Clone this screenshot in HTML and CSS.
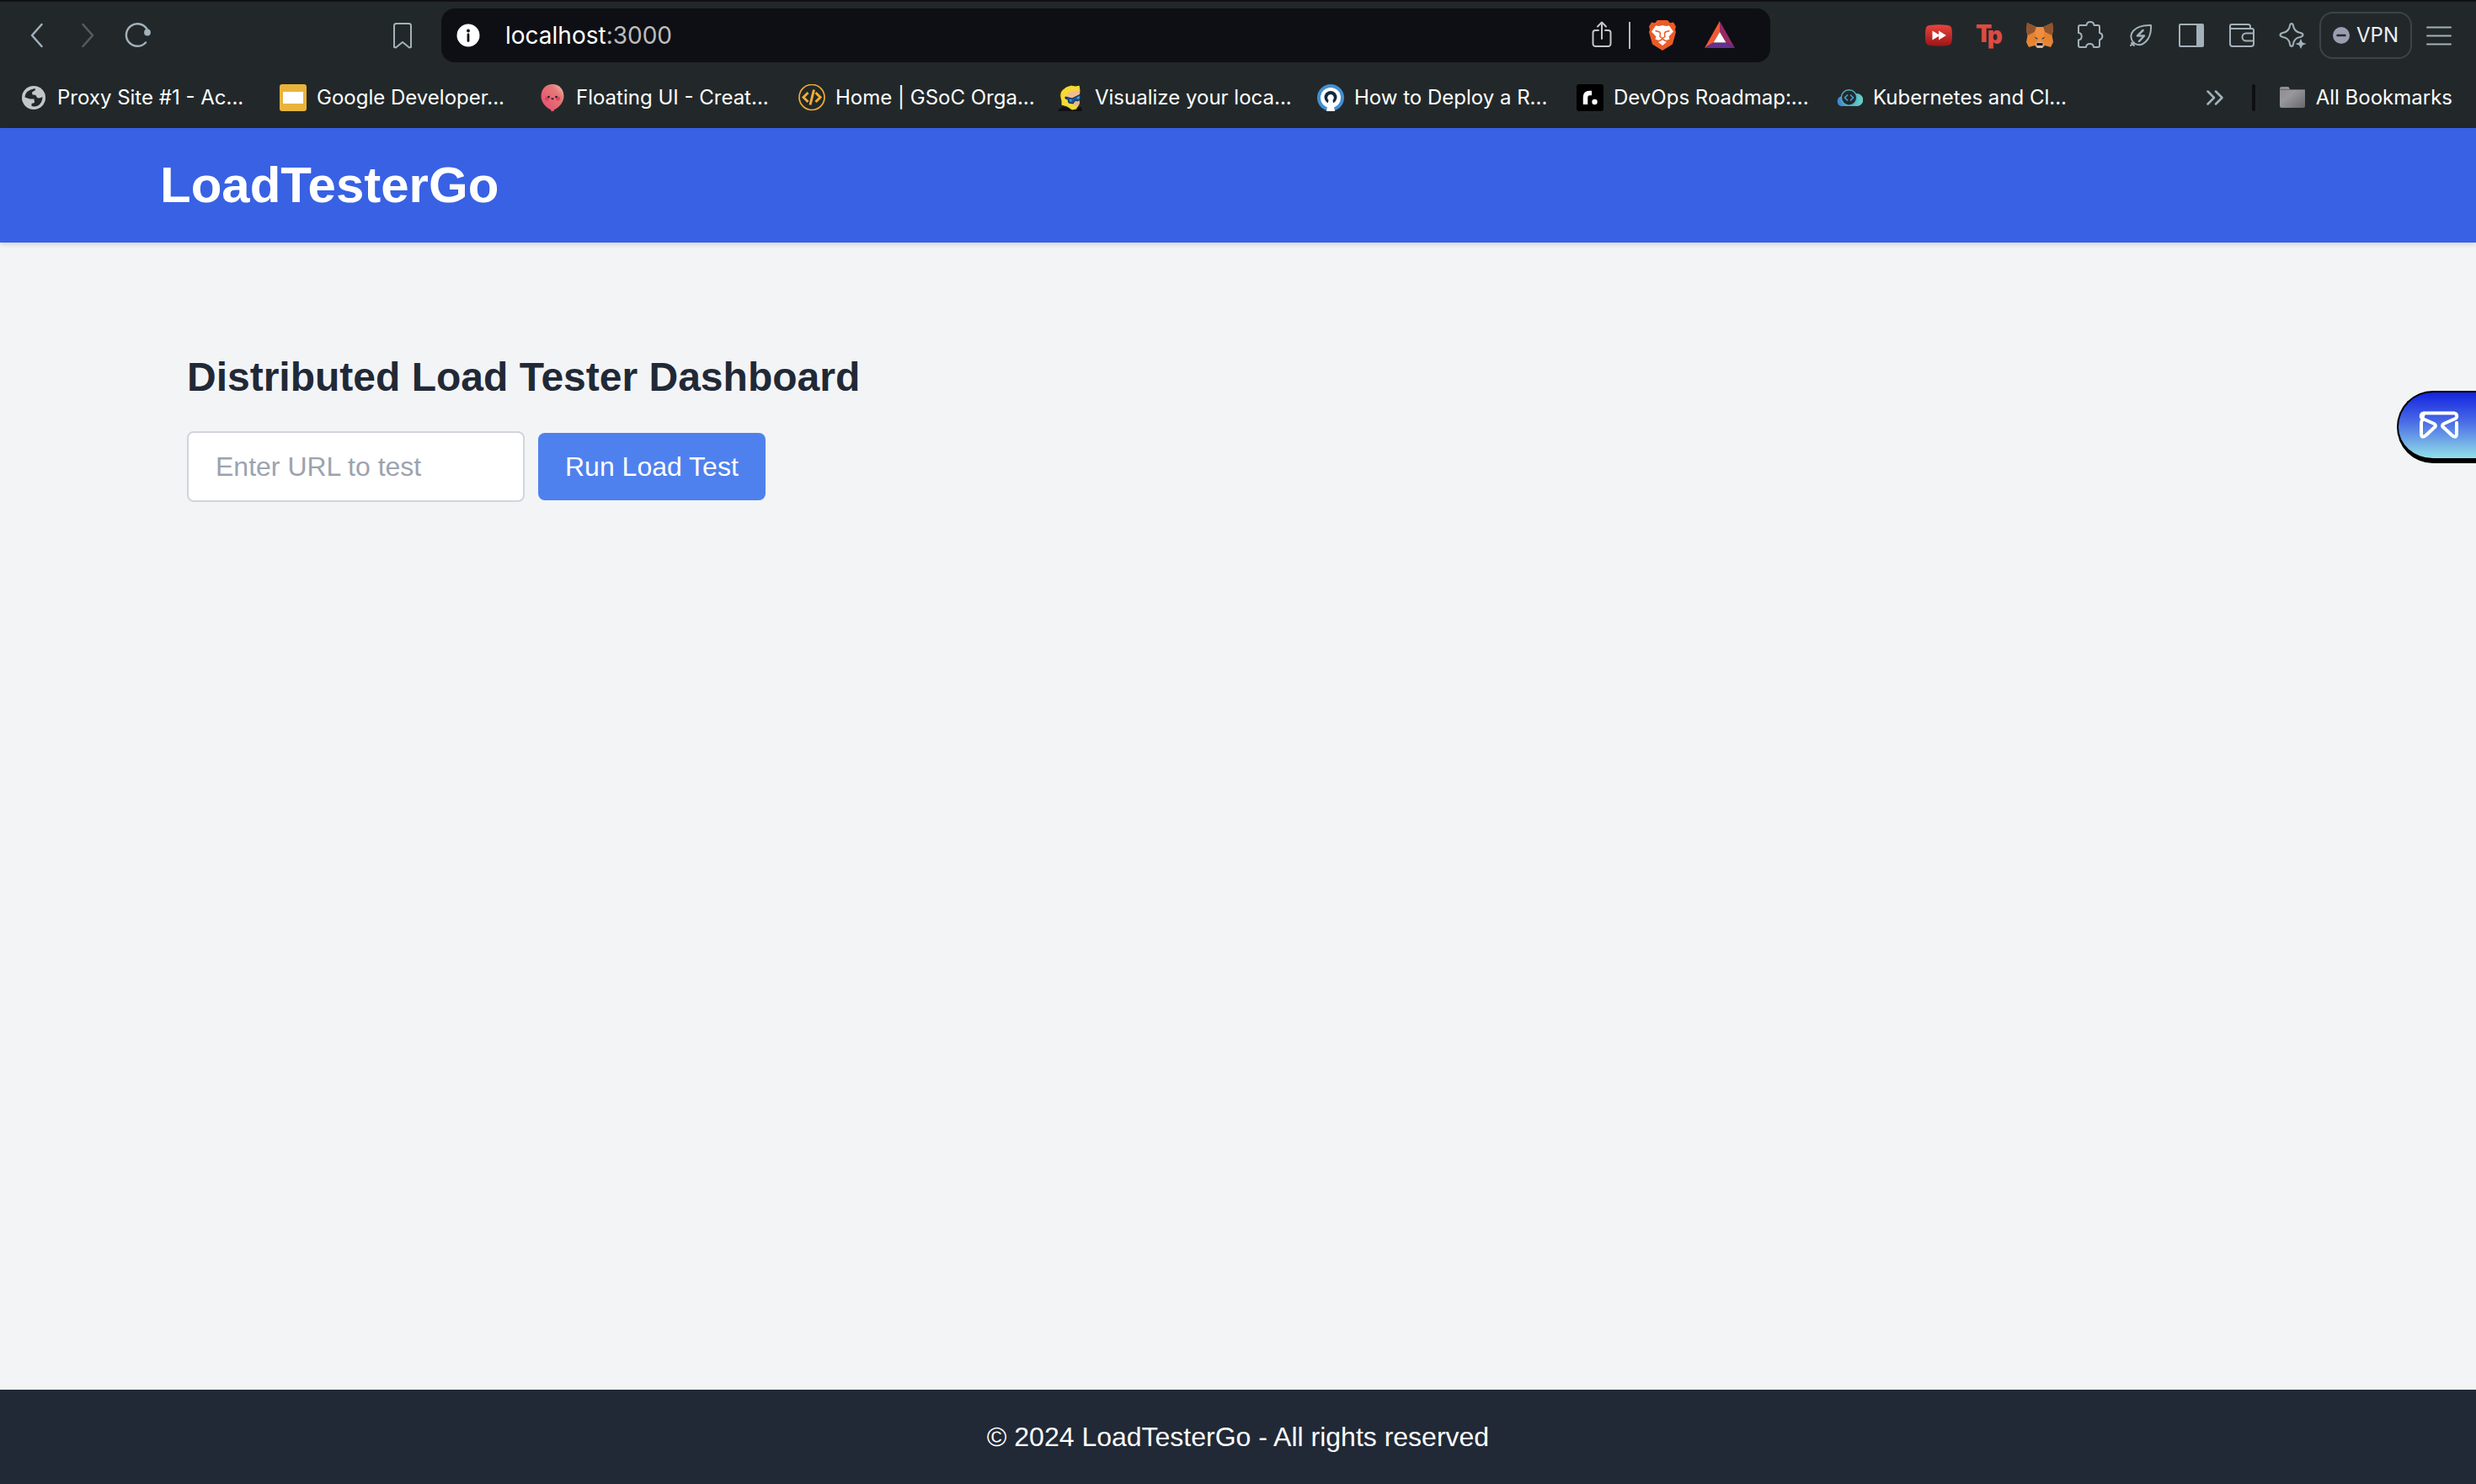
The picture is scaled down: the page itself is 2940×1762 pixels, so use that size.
FILE: index.html
```html
<!DOCTYPE html>
<html lang="en">
<head>
<meta charset="utf-8">
<meta name="viewport" content="width=device-width, initial-scale=1">
<title>LoadTesterGo</title>
<link rel="stylesheet" href="styles.css">
</head>
<body>
<div class="window">
  <div class="chrome">
    <div class="toolbar">
      <div class="nav-group">
        <button class="icon-btn" aria-label="Back"><svg viewBox="0 0 36 36"><path d="M23.500 5 12 18l11.500 13" class="line line-bold"/></svg></button>
        <button class="icon-btn dim" aria-label="Forward" disabled><svg viewBox="0 0 36 36"><path d="M12.500 5 24 18 12.500 31" class="line line-bold"/></svg></button>
        <button class="icon-btn" aria-label="Reload"><svg viewBox="0 0 36 36"><path d="M27 26.500A13.300 13.300 0 1 1 28.500 10.500" class="line line-bold"/><circle cx="29" cy="14.500" r="3.900" fill="currentColor"/></svg></button>
        <button class="icon-btn push" aria-label="Bookmark this page"><svg viewBox="0 0 36 36"><path d="M10.500 4h15a2.500 2.500 0 0 1 2.500 2.500V32l-2 .5-8-6.500-8 6.500-2-.5V6.500A2.500 2.500 0 0 1 10.500 4z" class="line"/></svg></button>
      </div>
      <div class="address">
        <svg class="icon" viewBox="0 0 36 36"><circle cx="18" cy="18" r="13.500" fill="#fff"/><circle cx="18" cy="12.500" r="1.900" fill="#0e0f14"/><path d="M18 17v7.500" stroke="#0e0f14" stroke-width="2.800" stroke-linecap="round"/></svg>
        <span class="url">localhost<span class="port">:3000</span></span>
        <div class="address-actions">
          <button class="icon-btn share" aria-label="Share"><svg viewBox="0 0 36 36"><path d="M14 12h-3.500a3 3 0 0 0-3 3v13a3 3 0 0 0 3 3h15a3 3 0 0 0 3-3V15a3 3 0 0 0-3-3H22M18 22V3M13 7.500 18 2.500l5 5" class="line"/></svg></button>
          <span class="address-rule"></span>
          <button class="icon-btn" aria-label="Brave Shields"><svg viewBox="0 0 36 36"><path d="M12 0h12l3 3.200 4-.7 3 5-1 3.500 1 3-4 14.500L18 36 6 28.500 2 14l1-3-1-3.500 3-5 4 .7z" fill="#eb5b26"/><path d="M10 6.500 14 7l4-1 4 1 4-.5 5 7-5.500 6 1 3-4 1.500-3.500-2-1 .2-1-.2-3.500 2-4-1.500 1-3L5 13.500zM18 23.500l5 2.500-5 4-5-4z" fill="#fff"/><path d="M9.500 12.500l5 1.500 1 1.500-.5 4 3 2 3-2-.5-4 1-1.500 5-1.500" fill="none" stroke="#eb5b26" stroke-width="1.500"/></svg></button>
          <button class="icon-btn" aria-label="Brave Rewards"><svg viewBox="0 0 36 36"><path d="M18 1 0 33l10.500-6.500L18 14z" fill="#f15a33"/><path d="M18 1v13l7.500 12.500L36 33z" fill="#952a63"/><path d="M0 33h36l-10.500-6.500h-15z" fill="#643092"/><path d="M18 14l7.500 12.500h-15z" fill="#fff"/></svg></button>
        </div>
      </div>
      <div class="extensions">
        <button class="icon-btn" aria-label="Video speed"><svg viewBox="0 0 36 36"><defs><linearGradient id="red" x1="0" y1="0" x2="0" y2="1"><stop offset="0" stop-color="#e8443e"/><stop offset="1" stop-color="#9c1516"/></linearGradient></defs><path d="M7 6q11-1.500 22 0 4 .5 4.500 4.500 1 7.500 0 15-.5 3.500-4.500 4.500-11 1.500-22 0-4-1-4.500-4.500-1-7.500 0-15Q3 6.500 7 6z" fill="url(#red)"/><path d="M10.500 12.500 18 17v-4.500l9 5.500-9 5.500V19l-7.500 4.500z" fill="#fff"/></svg></button>
        <button class="icon-btn" aria-label="Tp"><svg viewBox="0 0 36 36" class="tp"><text x="2" y="26">T<tspan dx="-4" dy="2">p</tspan></text></svg></button>
        <button class="icon-btn" aria-label="MetaMask"><svg viewBox="0 0 36 36"><path d="M3 3l11 5h8l11-5 1 9-1.500 6L34 26l-3 6-7-2-3 3h-6l-3-3-7 2-3-6 1.500-8L2 12z" fill="#e8863a"/><path d="M3 3l11 5-2 6-8 4-2-6zM33 3 22 8l2 6 8 4 2-6z" fill="#8f5430"/><path d="M14 8h8l2 6-3 12h-6l-3-12z" fill="#ef8e3c"/><path d="M4 18l8-4 3 12-12 .5zM32 18l-8-4-3 12 12 .5z" fill="#e5832f"/><path d="M11 20l4 1 .5 2zM25 20l-4 1-.5 2z" fill="#263346"/><path d="M13 28l2-2h6l2 2-2 5h-6z" fill="#cdbfb2"/><path d="M14.500 27h7v3h-7z" fill="#15171a"/></svg></button>
        <button class="icon-btn" aria-label="Extensions"><svg viewBox="0 0 36 36"><path d="M6 6h7.500c.5-5.500 8.500-5.500 9 0H27a2 2 0 0 1 2 2v7c4.500 1 4.500 7 0 8.500V30a2 2 0 0 1-2 2h-5c-.5-5.500-8.500-5.500-9 0H6a2 2 0 0 1-2-2v-6.500c5-.5 5-8 0-8.500V8a2 2 0 0 1 2-2z" class="line"/></svg></button>
        <button class="icon-btn" aria-label="Energy saver"><svg viewBox="0 0 36 36"><path d="M6 30l4-3.500M7 27l3 3M9.500 27C1 16 11 5.500 30 6 31 22.500 20 34 9.500 27z" class="line"/><path d="M20.500 12 14 18.500h8L16 25" class="line line-bold"/></svg></button>
        <button class="icon-btn" aria-label="Sidebar"><svg viewBox="0 0 36 36"><rect x="4" y="5" width="28" height="26" rx="1" class="line"/><path d="M24 5h8v26h-8z" fill="currentColor"/></svg></button>
        <button class="icon-btn" aria-label="Wallet"><svg viewBox="0 0 36 36"><path d="M28 10V7.500A2.500 2.500 0 0 0 25.500 5H6a2 2 0 0 0-2 2v21a3 3 0 0 0 3 3h22a3 3 0 0 0 3-3V12a2 2 0 0 0-2-2H6a2 2 0 0 1-2-2M32 15.500h-9a4.500 4.500 0 0 0 0 9h9" class="line"/></svg></button>
        <button class="icon-btn" aria-label="Leo AI"><svg viewBox="0 0 36 36"><path d="M17 4q1.500 0 2 2.500 1 7 8.500 8.500 3 .8 3 2.500t-3 2.500Q20 21 19 28.500q-.5 2.500-2 2.500t-2-2.500Q14 21 6.500 20q-3-.8-3-2.500t3-2.500Q14 13.500 15 6.500 15.500 4 17 4z" class="line"/><path d="M28 22l2 4.500 4.500 1.500-4.500 1.800-2 4.200-2-4.200-4.500-1.800 4.500-1.500z" fill="currentColor"/></svg></button>
      </div>
      <button class="vpn"><svg viewBox="0 0 20 20"><circle cx="10" cy="10" r="10" fill="#9a9cb0"/><path d="M5.500 10h9" stroke="#22282a" stroke-width="2.500" stroke-linecap="round"/></svg>VPN</button>
      <button class="icon-btn" aria-label="Menu"><svg viewBox="0 0 36 36"><path d="M4 8.500h28M4 18.500h28M4 28.500h28" class="line"/></svg></button>
    </div>
    <nav class="bookmarks" aria-label="Bookmarks">
      <a href="#" class="bookmark"><svg viewBox="0 0 32 32"><circle cx="16" cy="16" r="14" fill="#c3c6cb"/><path d="M5.500 15.500Q6 7 17.500 5l.5 2-4 2.500.5 3q5-.5 5 3 3 2 7-.5 0 7-5.500 10.500-4 1.500-7.500.5V23l3.500-1-.5-4.500h-5z" fill="#22282a"/></svg><span>Proxy Site #1 - Ac...</span></a>
      <a href="#" class="bookmark"><svg viewBox="0 0 32 32"><rect width="32" height="32" rx="3" fill="#e9b43c"/><path d="M4 9h24v14H4z" fill="#fff"/></svg><span>Google Developer...</span></a>
      <a href="#" class="bookmark"><svg viewBox="0 0 32 32"><defs><linearGradient id="balloon" x1="1" y1="0" x2="0" y2="1"><stop offset="0" stop-color="#f3c9bd"/><stop offset=".3" stop-color="#e47a78"/><stop offset="1" stop-color="#e8486e"/></linearGradient></defs><path d="M16 0C7 0 2.500 7 2.500 14.500c0 7 6 13.500 12 16L14 32h4l-.5-1.500c6-2.500 12-9 12-16C29.500 7 25 0 16 0z" fill="url(#balloon)"/><circle cx="9.500" cy="17" r="2.500" fill="#d94464"/><circle cx="22.500" cy="17" r="2.500" fill="#d94464"/><circle cx="11.500" cy="15" r="1.300" fill="#222"/><circle cx="20.500" cy="15" r="1.300" fill="#222"/><path d="M14 16.500q2 4 4 0z" fill="#222"/></svg><span>Floating UI - Creat...</span></a>
      <a href="#" class="bookmark"><svg viewBox="0 0 32 32"><circle cx="16" cy="15.500" r="15" fill="none" stroke="#f0ac35" stroke-width="1.700"/><path d="M11.500 10 6 15.500l5.500 5.500M20.500 10l5.500 5.500-5.500 5.500M18.500 6.500l-4.500 18" fill="none" stroke="#f0ac35" stroke-width="3"/></svg><span>Home | GSoC Orga...</span></a>
      <a href="#" class="bookmark"><svg viewBox="0 0 32 32"><path d="M0 32q1-4 7-5l13 2 8-2 1 5z" fill="#101114"/><path d="M4 20Q1 11 5 7l5-4 6-2 5 1 5-1 1 6-1 17-4 6-5 1-6-4-7-2z" fill="#f6d935" stroke="#25230f"/><path d="M10 14l3-4 6-2 7-1v6l-11 5-5-1z" fill="#f0bd92"/><path d="M17 23l5-3 4 1-1 4-4 1z" fill="#ecb68a"/><path d="M9 15l8 2 10-5v6l-4 2-2-1-3 4-5-1-1-4-3-1z" fill="#14589c" stroke="#0d2440"/><path d="M14 18l3 .5-2 3zM22 16l4-2-1 4z" fill="#49a4e3"/></svg><span>Visualize your loca...</span></a>
      <a href="#" class="bookmark"><svg viewBox="0 0 32 32"><circle cx="16" cy="16" r="16" fill="#438fd0"/><circle cx="16" cy="16" r="12" fill="#fff"/><circle cx="16" cy="15.500" r="7.500" fill="#0f2a40"/><path d="M16 12a4 4 0 0 1 2.500 7L21 32H11l2.500-13A4 4 0 0 1 16 12z" fill="#fff"/></svg><span>How to Deploy a R...</span></a>
      <a href="#" class="bookmark"><svg viewBox="0 0 32 32"><rect width="32" height="32" rx="3" fill="#000"/><path d="M10.500 24V15.500q0-5 5-5H18" fill="none" stroke="#fff" stroke-width="5.500"/><circle cx="21.500" cy="21" r="3.200" fill="#fff"/></svg><span>DevOps Roadmap:...</span></a>
      <a href="#" class="bookmark"><svg viewBox="0 0 32 32"><defs><linearGradient id="cloud"><stop offset="0" stop-color="#3f86d6"/><stop offset="1" stop-color="#68d3c6"/></linearGradient></defs><path d="M6 26a6 6 0 0 1 0-11.500L9 11h15a7.500 7.500 0 0 1 1.500 15z" fill="url(#cloud)"/><circle cx="15.500" cy="16" r="9.200" fill="#22282a" stroke="#4fb4c4" stroke-width="1.400"/><path d="M14 12.500 10.500 16l3.500 3.500M17 12.500 20.500 16 17 19.500" fill="none" stroke="#4a9bd6" stroke-width="1.700"/></svg><span>Kubernetes and Cl...</span></a>
      <div class="bookmarks-end">
        <button class="more" aria-label="More bookmarks"><svg viewBox="0 0 20 18"><path d="M1.500 1.500 9 9l-7.500 7.500M11 1.500 18.500 9 11 16.500" class="line line-bold"/></svg></button>
        <span class="bookmarks-rule"></span>
        <a href="#" class="bookmark all"><svg viewBox="0 0 32 32"><defs><linearGradient id="folder" x1="0" y1="0" x2="1" y2="1"><stop offset="0" stop-color="#8c8c90"/><stop offset=".4" stop-color="#98989c"/><stop offset="1" stop-color="#6a6868"/></linearGradient></defs><path d="M1 7V5q0-2 2-2h8q1 0 2 3h16q2 0 2 2v18q0 2-2 2H3q-2 0-2-2z" fill="url(#folder)"/><path d="M1 6.500h30" stroke="#6b6b6d"/></svg><span>All Bookmarks</span></a>
      </div>
    </nav>
  </div>
  <header class="site-header"><div class="container"><h1>LoadTesterGo</h1></div></header>
  <main class="content">
    <div class="container dashboard">
      <h2>Distributed Load Tester Dashboard</h2>
      <form class="test-form">
        <input type="text" class="url-input" placeholder="Enter URL to test" aria-label="URL to test">
        <button type="button" class="run">Run Load Test</button>
      </form>
    </div>
  </main>
  <footer class="site-footer"><p>© 2024 LoadTesterGo - All rights reserved</p></footer>
</div>
<button class="mail-tab" aria-label="Open mail"><svg viewBox="0 0 48 34"><path d="M6 2.500h36a3.500 3.500 0 0 1 1.500 6.500L30 15q-4 2.500 0 5l9 8.500q6 5 6-2V14M3 14v12.500q0 7 6 2l9-8.500q4-2.500 0-5L4.500 9A3.500 3.500 0 0 1 6 2.500z"/></svg></button>
</body>
</html>
```
FILE: styles.css
```css
* { box-sizing: border-box; }

body {
  margin: 0;
  background: #f3f4f6;
  font-family: "Liberation Sans", Arial, sans-serif;
  font-size: 32px;
  line-height: 48px;
}

h1, h2, p { margin: 0; }
a { color: inherit; text-decoration: none; }
button { padding: 0; border: 0; background: none; color: inherit; font: inherit; }
svg { display: block; flex: none; }

.window { display: flex; flex-direction: column; min-height: 100vh; }

/* Browser chrome */
.chrome {
  border-top: 2px solid #0f1014;
  background: #22282a;
  color: #fff;
  font: 400 24px/32px Inter, "Noto Sans", sans-serif;
}

.toolbar { display: flex; align-items: center; height: 80px; padding: 0 26px; color: #a3b1ba; }
.icon-btn, .icon, .icon-btn svg { flex: none; width: 36px; height: 36px; }
.dim { color: #565c60; }
.line { fill: none; stroke: currentColor; stroke-width: 2; stroke-linecap: round; stroke-linejoin: round; }
.line-bold { stroke-width: 2.5; }

.nav-group { display: flex; flex: none; gap: 24px; width: 470px; }
.push { margin-left: auto; }

.address {
  display: flex;
  flex: 1;
  align-items: center;
  height: 64px;
  margin-left: 28px;
  padding: 0 42px 0 14px;
  border-radius: 16px;
  background: #0e0f14;
}
.url { margin-left: 26px; color: #fff; font-size: 28px; }
.port { color: #bdbdbd; }
.address-actions { display: flex; align-items: center; gap: 32px; margin-left: auto; }
.share { margin-right: -18px; color: #c4c6c8; }
.address-rule { width: 2px; height: 32px; margin-right: -12px; background: #b5b7b9; }

.extensions { display: flex; flex: none; gap: 24px; margin-left: 182px; }
.tp { overflow: visible; }
.tp text { fill: #dd4b42; font-family: Inter, sans-serif; font-size: 28px; font-weight: 900; }

.vpn {
  display: flex;
  flex: none;
  align-items: center;
  justify-content: center;
  gap: 8px;
  width: 110px;
  height: 56px;
  margin: 0 14px;
  border: 2px solid #3b4449;
  border-radius: 16px;
  color: #edeff2;
}
.vpn svg { width: 20px; height: 20px; }

.bookmarks { display: flex; align-items: center; height: 70px; padding: 0 28px 2px 24px; }
.bookmark { display: flex; flex: none; align-items: center; gap: 12px; width: 308px; white-space: nowrap; }
.bookmark svg { width: 32px; height: 32px; }
.bookmarks-end { display: flex; align-items: center; margin-left: auto; }
.more { color: #a3b1ba; }
.more svg { width: 20px; height: 18px; }
.bookmarks-rule { width: 4px; height: 32px; margin: 0 28px 0 34px; border-radius: 2px; background: #0e0f14; }
.all { width: auto; }

/* Site */
.container { width: 100%; max-width: 2560px; margin: 0 auto; }

.site-header {
  padding: 32px 0;
  background: #3861e4;
  color: #fff;
  box-shadow: 0 2px 6px rgba(0, 0, 0, 0.15);
}
.site-header h1 { font-size: 60px; line-height: 72px; }

.content { flex: 1; padding: 96px 0; }
.dashboard { padding: 32px; }
.dashboard h2 { margin-bottom: 32px; color: #212936; font-size: 48px; line-height: 64px; }

.test-form { display: flex; align-items: center; gap: 16px; }
.url-input {
  width: 401px;
  height: 84px;
  padding: 16px 32px;
  border: 2px solid #d1d5db;
  border-radius: 8px;
  background: #fff;
  color: #212936;
  font: inherit;
}
.url-input::placeholder { color: #9ca3af; opacity: 1; }
.run { padding: 16px 32px; border-radius: 8px; background: #4f81ee; color: #fff; }

.site-footer { padding: 32px; background: #212936; color: #fff; text-align: center; }

/* Mail tab pinned over the right edge */
.mail-tab {
  position: fixed;
  top: 464px;
  right: 0;
  width: 94px;
  height: 86px;
  padding-left: 24px;
  border: solid #000;
  border-width: 2px 0 6px 2px;
  border-radius: 43px 0 0 43px;
  background: linear-gradient(#1424e0, #4a6ce6 45%, #93e0e8);
}
.mail-tab svg { width: 48px; height: 34px; fill: none; stroke: #fff; stroke-width: 4; stroke-linecap: round; stroke-linejoin: round; }
```
